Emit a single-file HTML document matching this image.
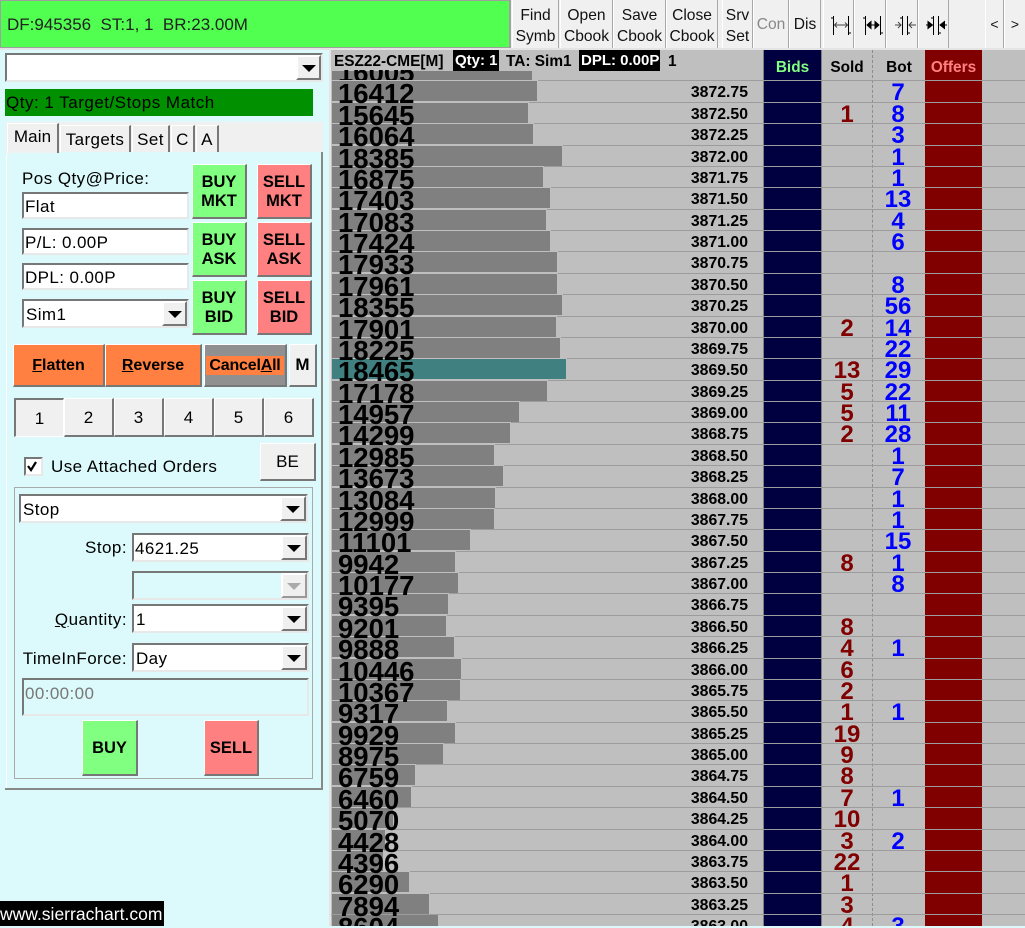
<!DOCTYPE html>
<html><head><meta charset="utf-8"><style>
html,body{margin:0;padding:0}
body{width:1025px;height:926px;overflow:hidden;position:relative;background:#dcfafb;font-family:"Liberation Sans",sans-serif;color:#000}
div{position:absolute;box-sizing:border-box;white-space:nowrap}
.tb{background:#f0f0f0;border-left:1px solid #fff;border-right:1px solid #a8a8a8;top:0;height:49px;text-align:center;font-size:15.6px;line-height:21px;padding-top:5px;color:#111}
.btn{border-style:solid;border-width:1px 2px 2px 1px;border-color:#fff #777 #777 #fff;background:#f0f0f0;text-align:center;display:flex;align-items:center;justify-content:center;white-space:normal}
.g{background:#80ff80;font-weight:bold;font-size:16.5px;line-height:19px;padding-top:2px}
.rd{background:#ff8080;font-weight:bold;font-size:16.5px;line-height:19px;padding-top:2px}
.or{background:#ff8040;font-weight:bold;font-size:16px;padding-top:2px}
.num{font-size:17px;background:#f0f0f0;padding-top:2px}
.ed{border:2px solid;border-color:#777 #e8e8e8 #e8e8e8 #777;background:#fff;font-size:17px;letter-spacing:.4px;padding-left:1px;line-height:25px}
.cb{border:2px solid;border-color:#777 #e8e8e8 #e8e8e8 #777;background:#fff;font-size:17px;letter-spacing:.4px;padding-left:2px;line-height:28px}
.ar{right:0;top:0;bottom:0;width:26px;background:#f0f0f0;border:2px solid;border-color:#fff #777 #777 #fff}
.ar:after{content:"";position:absolute;left:4px;top:8px;border:7px solid transparent;border-top:7px solid #000;border-bottom:0}
.ar.d{border-color:#fff #999 #999 #fff}
.ar.d:after{border-top-color:#aaa}
.lb{font-size:17px;letter-spacing:.45px;line-height:20px}
.tab{background:#f0f0f0;border-top:1px solid #fff;border-left:1px solid #fff;border-right:2px solid #777;text-align:center;font-size:17px;letter-spacing:.4px;line-height:27px;top:125px;height:27px}
.r{left:331px;width:694px;height:22px;border-top:1px solid #9c9c9c}
.b{left:1px;top:0;height:20px;background:#808080;box-shadow:0 0 0 1px #bfbfbf,2px 0 0 0 #bfbfbf}
.v{left:7px;top:-1px;font-size:27.5px;line-height:28px;font-weight:bold;color:#000;z-index:2}
.p{left:357px;width:60px;text-align:right;top:4px;font-size:15.8px;line-height:16px;font-weight:bold}
.s{left:486px;width:60px;text-align:center;top:0;font-size:24px;line-height:24px;font-weight:bold;color:#800000;z-index:2}
.o{left:537px;width:60px;text-align:center;top:0;font-size:24px;line-height:24px;font-weight:bold;color:#0000ff;z-index:2}
.h{top:59px;font-size:15.4px;font-weight:bold;line-height:17px;text-align:center}
.t{top:53px;font-size:15.4px;font-weight:bold;line-height:17px}
</style></head><body>
<!-- toolbar -->
<div style="left:0;top:0;width:1025px;height:50px;background:#f0f0f0"></div>
<div style="left:0;top:0;width:511px;height:48px;background:#50ff50;border:1px solid #a0a0a0;border-right:2px solid #a0a0a0;font-size:17px;line-height:48px;padding-left:6px;color:#222;white-space:pre">DF:945356&nbsp; ST:1, 1&nbsp; BR:23.00M</div>
<div class="tb" style="left:512px;width:47px">Find<br>Symb</div>
<div class="tb" style="left:560px;width:53px">Open<br>Cbook</div>
<div class="tb" style="left:613px;width:53px">Save<br>Cbook</div>
<div class="tb" style="left:666px;width:52px">Close<br>Cbook</div>
<div class="tb" style="left:722px;width:31px">Srv<br>Set</div>
<div class="tb" style="left:753px;width:36px;line-height:49px;padding:0;color:#888">Con</div>
<div class="tb" style="left:789px;width:32px;line-height:49px;padding:0">Dis</div>
<div class="tb" style="left:823px;width:31px"></div>
<div class="tb" style="left:854px;width:32px"></div>
<div class="tb" style="left:886px;width:32px"></div>
<div class="tb" style="left:918px;width:31px"></div>
<div class="tb" style="left:985px;width:19px;line-height:49px;padding:0;font-size:14px">&lt;</div>
<div class="tb" style="left:1004px;width:21px;line-height:49px;padding:0;font-size:14px;border-right:0">&gt;</div>
<svg style="position:absolute;left:820px;top:8px;z-index:3" width="135" height="34" viewBox="0 0 135 34" fill="none" stroke="#000" stroke-width="1">
<path d="M13.5 8V27M28.5 8V27M11 10H13M29 25H31"/><path d="M15 17H27M17 14.5L14.5 17L17 19.5M25 14.5L27.5 17L25 19.5" stroke="#444"/>
<path d="M45.5 8V27M60.5 8V27M43 10H45M61 25H63"/><path d="M47 17H59"/><path d="M47 17L51 13.5V20.5ZM59 17L55 13.5V20.5Z" fill="#000"/>
<path d="M82.5 8V27M87.5 8V27M80 10H82M88 25H90"/><path d="M75 17H81M78 14L81 17L78 20M89 17H96M92 14L89 17L92 20" stroke="#444"/>
<path d="M113.5 8V27M118.5 8V27M111 10H113M119 25H121"/><path d="M106 17H112M120 17H127"/><path d="M112.5 17L108 13.5V20.5ZM120 17L124.5 13.5V20.5Z" fill="#000"/>
</svg>
<div style="left:0;top:48px;width:1025px;height:2px;background:#e4e4e4"></div>

<!-- left panel -->
<div class="cb" style="left:5px;top:53px;width:318px;height:29px"><div class="ar" style="width:25px"></div></div>
<div style="left:5px;top:89px;width:308px;height:27px;background:#009000;font-size:17px;letter-spacing:.5px;line-height:27px;padding-left:1px">Qty: 1 Target/Stops Match</div>
<div style="left:6px;top:122px;width:317px;height:32px;background:#f0f0f0"></div>
<div style="left:9px;top:152px;width:314px;height:636px;background:#dcfafb;border-right:2px solid #888"></div>
<div style="left:5px;top:788px;width:318px;height:2px;background:#888"></div>
<div style="left:6px;top:154px;width:1px;height:634px;background:#fff"></div>
<div class="tab" style="left:7px;width:52px;top:123px;height:30px;line-height:26px;letter-spacing:.1px">Main</div>
<div class="tab" style="left:60px;width:71px">Targets</div>
<div class="tab" style="left:132px;width:38px">Set</div>
<div class="tab" style="left:171px;width:24px">C</div>
<div class="tab" style="left:196px;width:23px">A</div>

<div class="lb" style="left:22px;top:169px">Pos Qty@Price:</div>
<div class="ed" style="left:22px;top:192px;width:167px;height:27px">Flat</div>
<div class="ed" style="left:22px;top:228px;width:167px;height:27px">P/L: 0.00P</div>
<div class="ed" style="left:22px;top:263px;width:167px;height:27px">DPL: 0.00P</div>
<div class="cb" style="left:22px;top:299px;width:167px;height:29px;padding-left:2px">Sim1<div class="ar" style="width:25px"></div></div>

<div class="btn g" style="left:192px;top:164px;width:55px;height:55px">BUY<br>MKT</div>
<div class="btn rd" style="left:257px;top:164px;width:55px;height:55px">SELL<br>MKT</div>
<div class="btn g" style="left:192px;top:222px;width:55px;height:55px">BUY<br>ASK</div>
<div class="btn rd" style="left:257px;top:222px;width:55px;height:55px">SELL<br>ASK</div>
<div class="btn g" style="left:192px;top:280px;width:55px;height:55px">BUY<br>BID</div>
<div class="btn rd" style="left:257px;top:280px;width:55px;height:55px">SELL<br>BID</div>

<div class="btn or" style="left:13px;top:344px;width:92px;height:43px"><span><u>F</u>latten</span></div>
<div class="btn or" style="left:105px;top:344px;width:97px;height:43px"><span><u>R</u>everse</span></div>
<div class="btn" style="left:204px;top:344px;width:83px;height:43px;background:#909090;font-weight:bold;font-size:16px"><span style="background:#ff8040;padding:0 2px;line-height:19px;display:block;width:74px;white-space:nowrap;letter-spacing:-.2px">Cancel<u>A</u>ll</span></div>
<div class="btn" style="left:289px;top:344px;width:28px;height:43px;font-weight:bold;font-size:17px">M</div>

<div class="btn num" style="left:14px;top:398px;width:50px;height:39px;border-color:#777 #fff #fff #777;border-width:2px 1px 1px 2px">1</div>
<div class="btn num" style="left:64px;top:398px;width:50px;height:39px">2</div>
<div class="btn num" style="left:114px;top:398px;width:50px;height:39px">3</div>
<div class="btn num" style="left:164px;top:398px;width:50px;height:39px">4</div>
<div class="btn num" style="left:214px;top:398px;width:50px;height:39px">5</div>
<div class="btn num" style="left:264px;top:398px;width:50px;height:39px">6</div>

<div style="left:24px;top:457px;width:19px;height:19px;background:#fff;border:2px solid;border-color:#777 #e8e8e8 #e8e8e8 #777">
<svg style="position:absolute;left:1px;top:1px" width="13" height="13" viewBox="0 0 13 13"><path d="M1 6L4 10L9 2" fill="none" stroke="#000" stroke-width="2.2"/></svg></div>
<div class="lb" style="left:51px;top:457px">Use Attached Orders</div>
<div class="btn" style="left:260px;top:443px;width:56px;height:38px;font-size:17px">BE</div>

<div style="left:14px;top:487px;width:299px;height:292px;border:1px solid #aaa"></div>
<div class="cb" style="left:19px;top:494px;width:289px;height:29px;padding-left:2px">Stop<div class="ar"></div></div>
<div class="lb" style="left:20px;top:538px;width:107px;text-align:right">Stop:</div>
<div class="cb" style="left:132px;top:533px;width:177px;height:29px;padding-left:1px">4621.25<div class="ar"></div></div>
<div class="cb" style="left:132px;top:571px;width:177px;height:29px;background:#dcfafb"><div class="ar d"></div></div>
<div class="lb" style="left:20px;top:610px;width:107px;text-align:right"><u>Q</u>uantity:</div>
<div class="cb" style="left:132px;top:604px;width:177px;height:29px;padding-left:2px">1<div class="ar"></div></div>
<div class="lb" style="left:20px;top:649px;width:107px;text-align:right;letter-spacing:.4px">TimeInForce:</div>
<div class="cb" style="left:132px;top:643px;width:177px;height:29px;padding-left:2px">Day<div class="ar"></div></div>
<div class="cb" style="left:22px;top:678px;width:287px;height:38px;background:#dcfafb;color:#777;padding-left:1px;line-height:27px">00:00:00</div>
<div class="btn g" style="left:82px;top:720px;width:56px;height:56px">BUY</div>
<div class="btn rd" style="left:204px;top:720px;width:55px;height:56px">SELL</div>

<div style="left:0;top:901px;width:164px;height:25px;background:#000;color:#fff;font-size:17.5px;line-height:27px;padding-left:0">www.sierrachart.com</div>

<!-- ladder -->
<div style="left:329px;top:50px;width:696px;height:876px;background:#bfbfbf;border-left:2px solid #e4e4e4;overflow:hidden"></div>
<div style="left:763px;top:50px;width:59px;height:876px;background:#000040;border-left:1px solid #808080;border-right:1px solid #808080"></div>
<div style="left:925px;top:50px;width:57px;height:876px;background:#800000"></div>
<div style="left:872px;top:50px;width:0;height:876px;border-left:1px dashed #8c8c8c"></div>
<div class="t" style="left:334px;">ESZ22-CME[M]</div>
<div class="t" style="left:453px;top:50px;width:46px;height:21px;background:#000;color:#fff;line-height:22px;padding-left:2px;font-size:15px">Qty: 1</div>
<div class="t" style="left:506px;">TA: Sim1</div>
<div class="t" style="left:579px;top:50px;width:81px;height:21px;background:#000;color:#fff;line-height:22px;padding-left:2px;font-size:15px">DPL: 0.00P</div>
<div class="t" style="left:668px">1</div>
<div class="h" style="left:763px;width:59px;color:#80ff80">Bids</div>
<div class="h" style="left:822px;width:50px">Sold</div>
<div class="h" style="left:873px;width:52px">Bot</div>
<div class="h" style="left:925px;width:57px;color:#ff8080">Offers</div>

<div style="left:332px;top:70px;width:300px;height:10px;overflow:hidden"><div style="left:0;top:1px;width:200px;height:9px;background:#808080"></div><div class="v" style="left:6px;top:-11px">16005</div></div>

<div class="r" style="top:80px"><div class="b" style="width:205px"></div><div class="v">16412</div><div class="p">3872.75</div><div class="o">7</div></div>
<div class="r" style="top:102px"><div class="b" style="width:196px"></div><div class="v">15645</div><div class="p">3872.50</div><div class="s">1</div><div class="o">8</div></div>
<div class="r" style="top:123px"><div class="b" style="width:201px"></div><div class="v">16064</div><div class="p">3872.25</div><div class="o">3</div></div>
<div class="r" style="top:145px"><div class="b" style="width:230px"></div><div class="v">18385</div><div class="p">3872.00</div><div class="o">1</div></div>
<div class="r" style="top:166px"><div class="b" style="width:211px"></div><div class="v">16875</div><div class="p">3871.75</div><div class="o">1</div></div>
<div class="r" style="top:187px"><div class="b" style="width:218px"></div><div class="v">17403</div><div class="p">3871.50</div><div class="o">13</div></div>
<div class="r" style="top:209px"><div class="b" style="width:214px"></div><div class="v">17083</div><div class="p">3871.25</div><div class="o">4</div></div>
<div class="r" style="top:230px"><div class="b" style="width:218px"></div><div class="v">17424</div><div class="p">3871.00</div><div class="o">6</div></div>
<div class="r" style="top:251px"><div class="b" style="width:225px"></div><div class="v">17933</div><div class="p">3870.75</div></div>
<div class="r" style="top:273px"><div class="b" style="width:225px"></div><div class="v">17961</div><div class="p">3870.50</div><div class="o">8</div></div>
<div class="r" style="top:294px"><div class="b" style="width:230px"></div><div class="v">18355</div><div class="p">3870.25</div><div class="o">56</div></div>
<div class="r" style="top:316px"><div class="b" style="width:224px"></div><div class="v">17901</div><div class="p">3870.00</div><div class="s">2</div><div class="o">14</div></div>
<div class="r" style="top:337px"><div class="b" style="width:228px"></div><div class="v">18225</div><div class="p">3869.75</div><div class="o">22</div></div>
<div class="r" style="top:358px"><div class="b" style="width:234px;background:#408080"></div><div class="v">18465</div><div class="p">3869.50</div><div class="s">13</div><div class="o">29</div></div>
<div class="r" style="top:380px"><div class="b" style="width:215px"></div><div class="v">17178</div><div class="p">3869.25</div><div class="s">5</div><div class="o">22</div></div>
<div class="r" style="top:401px"><div class="b" style="width:187px"></div><div class="v">14957</div><div class="p">3869.00</div><div class="s">5</div><div class="o">11</div></div>
<div class="r" style="top:422px"><div class="b" style="width:178px"></div><div class="v">14299</div><div class="p">3868.75</div><div class="s">2</div><div class="o">28</div></div>
<div class="r" style="top:444px"><div class="b" style="width:162px"></div><div class="v">12985</div><div class="p">3868.50</div><div class="o">1</div></div>
<div class="r" style="top:465px"><div class="b" style="width:171px"></div><div class="v">13673</div><div class="p">3868.25</div><div class="o">7</div></div>
<div class="r" style="top:487px"><div class="b" style="width:163px"></div><div class="v">13084</div><div class="p">3868.00</div><div class="o">1</div></div>
<div class="r" style="top:508px"><div class="b" style="width:162px"></div><div class="v">12999</div><div class="p">3867.75</div><div class="o">1</div></div>
<div class="r" style="top:529px"><div class="b" style="width:138px"></div><div class="v">11101</div><div class="p">3867.50</div><div class="o">15</div></div>
<div class="r" style="top:551px"><div class="b" style="width:123px"></div><div class="v">9942</div><div class="p">3867.25</div><div class="s">8</div><div class="o">1</div></div>
<div class="r" style="top:572px"><div class="b" style="width:126px"></div><div class="v">10177</div><div class="p">3867.00</div><div class="o">8</div></div>
<div class="r" style="top:593px"><div class="b" style="width:116px"></div><div class="v">9395</div><div class="p">3866.75</div></div>
<div class="r" style="top:615px"><div class="b" style="width:114px"></div><div class="v">9201</div><div class="p">3866.50</div><div class="s">8</div></div>
<div class="r" style="top:636px"><div class="b" style="width:122px"></div><div class="v">9888</div><div class="p">3866.25</div><div class="s">4</div><div class="o">1</div></div>
<div class="r" style="top:658px"><div class="b" style="width:129px"></div><div class="v">10446</div><div class="p">3866.00</div><div class="s">6</div></div>
<div class="r" style="top:679px"><div class="b" style="width:128px"></div><div class="v">10367</div><div class="p">3865.75</div><div class="s">2</div></div>
<div class="r" style="top:700px"><div class="b" style="width:115px"></div><div class="v">9317</div><div class="p">3865.50</div><div class="s">1</div><div class="o">1</div></div>
<div class="r" style="top:722px"><div class="b" style="width:123px"></div><div class="v">9929</div><div class="p">3865.25</div><div class="s">19</div></div>
<div class="r" style="top:743px"><div class="b" style="width:111px"></div><div class="v">8975</div><div class="p">3865.00</div><div class="s">9</div></div>
<div class="r" style="top:764px"><div class="b" style="width:83px"></div><div class="v">6759</div><div class="p">3864.75</div><div class="s">8</div></div>
<div class="r" style="top:786px"><div class="b" style="width:79px"></div><div class="v">6460</div><div class="p">3864.50</div><div class="s">7</div><div class="o">1</div></div>
<div class="r" style="top:807px"><div class="b" style="width:61px"></div><div class="v">5070</div><div class="p">3864.25</div><div class="s">10</div></div>
<div class="r" style="top:829px"><div class="b" style="width:53px"></div><div class="v">4428</div><div class="p">3864.00</div><div class="s">3</div><div class="o">2</div></div>
<div class="r" style="top:850px"><div class="b" style="width:51px"></div><div class="v">4396</div><div class="p">3863.75</div><div class="s">22</div></div>
<div class="r" style="top:871px"><div class="b" style="width:77px"></div><div class="v">6290</div><div class="p">3863.50</div><div class="s">1</div></div>
<div class="r" style="top:893px"><div class="b" style="width:97px"></div><div class="v">7894</div><div class="p">3863.25</div><div class="s">3</div></div>
<div class="r" style="top:914px;height:12px;overflow:hidden"><div class="b" style="width:106px"></div><div class="v">8604</div><div class="p">3863.00</div><div class="s">4</div><div class="o">3</div></div>
</body></html>
